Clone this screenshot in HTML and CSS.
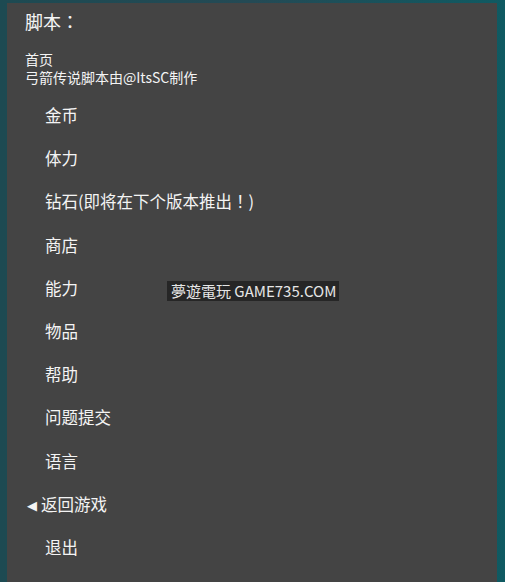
FILE: index.html
```html
<!DOCTYPE html>
<html lang="zh">
<head>
    <meta charset="UTF-8">
    <title>脚本</title>
    <link rel="stylesheet" href="styles.css">
</head>
<body>
<div class="screen">
    <div class="panel">
        <div class="panel-title" lang="ja">脚本：</div>
        <div class="panel-info">
            <p>首页</p>
            <p>弓箭传说脚本由@ItsSC制作</p>
        </div>
        <ul class="menu">
            <li>金币</li>
            <li>体力</li>
            <li>钻石(即将在下个版本推出<span class="punct" lang="ja">！</span>)</li>
            <li>商店</li>
            <li>能力</li>
            <li>物品</li>
            <li>帮助</li>
            <li>问题提交</li>
            <li>语言</li>
            <li class="back"><span class="arrow">◀</span>返回游戏</li>
            <li>退出</li>
        </ul>
        <!-- 水印 -->
        <div class="watermark">夢遊電玩 GAME735.COM</div>
    </div>
</div>
</body>
</html>
```

FILE: styles.css
```css
html,
body,
ul,
li,
p,
div {
    margin: 0;
    padding: 0;
}

body {
    width: 505px;
    height: 582px;
    overflow: hidden;
    font-family: "Noto Sans CJK SC", "Roboto", sans-serif;
    color: #f4f4f4;
}

.screen {
    height: 582px;
    background: linear-gradient(90deg, #1d4a52 0%, #244a55 50%, #0f5a62 100%);
    padding: 3px 8px 0 7px;
    box-sizing: border-box;
}

.panel {
    position: relative;
    height: 100%;
    background: #444444;
}

.panel-title {
    padding: 6px 0 0 18px;
    font-size: 18px;
    line-height: 24px;
    font-family: "Noto Sans CJK JP", sans-serif;
}

.panel-info {
    padding: 17px 0 0 18px;
    font-size: 14px;
    line-height: 18px;
}

.menu {
    list-style: none;
    padding-top: 8px;
}

.menu li {
    height: 43.2px;
    line-height: 43.2px;
    padding-left: 38px;
    font-size: 16.5px;
}

.menu .punct {
    font-family: "Noto Sans CJK JP", sans-serif;
}

.menu li.back {
    padding-left: 20px;
}

.menu .arrow {
    display: inline-block;
    width: 14px;
    font-size: 13px;
    font-family: "DejaVu Sans", sans-serif;
    vertical-align: 1px;
}

.watermark {
    position: absolute;
    left: 160px;
    top: 278px;
    padding: 0 3px 0 4px;
    height: 20px;
    line-height: 20px;
    background: #262626;
    color: #e6e6e6;
    font-size: 15px;
    font-family: "Noto Sans CJK TC", "Open Sans", sans-serif;
}
```
